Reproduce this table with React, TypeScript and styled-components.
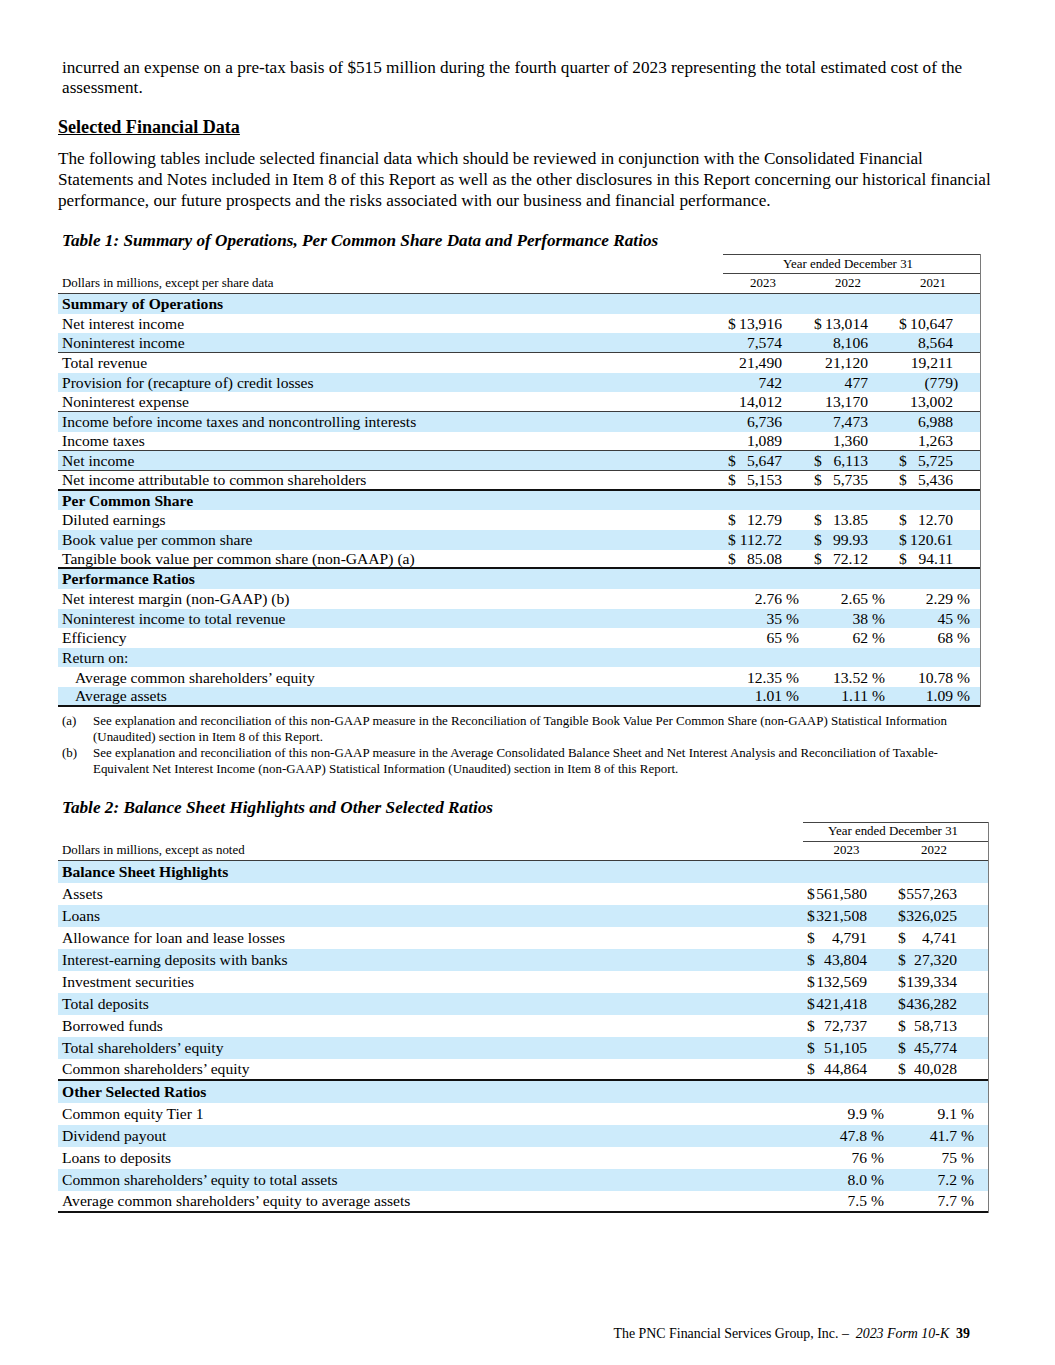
import React from 'react';
import styled, { createGlobalStyle } from 'styled-components';

const GlobalStyle = createGlobalStyle`
  html, body { margin: 0; padding: 0; background: #ffffff; }
  body { font-family: "Liberation Serif", "Times New Roman", serif; color: #000; }
`;

const BLUE = '#cdebfb';

const Page = styled.div`
  width: 1055px;
  min-height: 1365px;
  box-sizing: border-box;
  padding: 58px 0 0 58px;
  display: flex;
  flex-direction: column;
`;

const Para = styled.p<{ $lh: number; $mt: number; $ml?: number }>`
  margin: ${p => p.$mt}px 0 0 ${p => p.$ml ?? 0}px;
  font-size: 17.2px;
  line-height: ${p => p.$lh}px;
  white-space: nowrap;
`;

const Heading = styled.h2`
  margin: 19px 0 0 0;
  font-size: 18.1px;
  line-height: 20px;
  font-weight: bold;
  text-decoration: underline;
`;

const TableTitle = styled.h3<{ $mt: number }>`
  margin: ${p => p.$mt}px 0 0 4px;
  font-size: 17.2px;
  line-height: 20px;
  font-weight: bold;
  font-style: italic;
`;

const Table = styled.div<{ $w: number; $mt: number; $fs: number }>`
  width: ${p => p.$w + 1}px;
  margin-top: ${p => p.$mt}px;
  border-right: 1px solid #7a7a7a;
  box-sizing: border-box;
  font-size: ${p => p.$fs}px;
`;

const Row = styled.div<{ $cols: string; $h: number; $shade?: boolean; $rule?: 'thin' | 'thick' }>`
  display: grid;
  grid-template-columns: ${p => p.$cols};
  height: ${p => p.$h}px;
  box-sizing: border-box;
  align-items: center;
  line-height: 1;
  background: ${p => (p.$shade ? BLUE : 'transparent')};
  border-bottom: ${p =>
    p.$rule === 'thick' ? '2px solid #111' : p.$rule === 'thin' ? '1px solid #3c3c3c' : 'none'};
`;

const HeadRow = styled(Row)`
  font-size: 12.9px;
`;

const Label = styled.div<{ $indent?: boolean; $bold?: boolean }>`
  padding-left: ${p => (p.$indent ? 17 : 4)}px;
  font-weight: ${p => (p.$bold ? 'bold' : 'normal')};
  white-space: nowrap;
`;

const SmallLabel = styled.div`
  padding-left: 4px;
  font-size: 12.9px;
  white-space: nowrap;
`;

const YearEnded = styled.div<{ $span: number; $pr: number }>`
  grid-column: span ${p => p.$span};
  align-self: stretch;
  border-top: 1px solid #444;
  border-bottom: 1px solid #444;
  box-sizing: border-box;
  display: flex;
  align-items: center;
  justify-content: center;
  padding-right: ${p => p.$pr}px;
  font-size: 12.9px;
`;

const Year = styled.div<{ $pr: number }>`
  text-align: center;
  padding-right: ${p => p.$pr}px;
  font-size: 12.9px;
`;

const ValueCell = styled.div<{ $padL: number }>`
  display: flex;
  align-items: center;
  padding-left: ${p => p.$padL}px;
  white-space: nowrap;
`;

const Cur = styled.span`
  flex: 1;
  text-align: left;
`;

const Num = styled.span`
  text-align: right;
`;

const Suf = styled.span<{ $w: number }>`
  width: ${p => p.$w}px;
  text-align: left;
  white-space: pre;
`;

const Notes = styled.div`
  margin: 6px 0 0 4px;
  display: grid;
  grid-template-columns: 31px auto;
  font-size: 12.95px;
  line-height: 16px;
`;

const NoteMark = styled.div``;
const NoteText = styled.div`
  white-space: nowrap;
`;

const Footer = styled.div`
  margin-top: 113px;
  padding-right: 85px;
  display: flex;
  justify-content: flex-end;
  font-size: 13.9px;
  line-height: 16px;
  white-space: pre;
`;

const FootItalic = styled.span`
  font-style: italic;
`;
const FootBold = styled.span`
  font-weight: bold;
`;

type Cell = { cur?: string; num: string; suf?: string };
type DataRow = {
  label: string;
  section?: boolean;
  indent?: boolean;
  rule?: 'thin' | 'thick';
  values?: Cell[];
};
type ColCfg = { padL: number; suf: number; yearPr: number };

const d = (num: string): Cell => ({ cur: '$', num });
const n = (num: string): Cell => ({ num });
const pc = (num: string): Cell => ({ num, suf: ' %' });

const table1: DataRow[] = [
  { label: 'Summary of Operations', section: true },
  { label: 'Net interest income', values: [d('13,916'), d('13,014'), d('10,647')] },
  { label: 'Noninterest income', rule: 'thin', values: [n('7,574'), n('8,106'), n('8,564')] },
  { label: 'Total revenue', values: [n('21,490'), n('21,120'), n('19,211')] },
  { label: 'Provision for (recapture of) credit losses', values: [n('742'), n('477'), { num: '(779', suf: ')' }] },
  { label: 'Noninterest expense', rule: 'thin', values: [n('14,012'), n('13,170'), n('13,002')] },
  { label: 'Income before income taxes and noncontrolling interests', values: [n('6,736'), n('7,473'), n('6,988')] },
  { label: 'Income taxes', rule: 'thin', values: [n('1,089'), n('1,360'), n('1,263')] },
  { label: 'Net income', rule: 'thin', values: [d('5,647'), d('6,113'), d('5,725')] },
  { label: 'Net income attributable to common shareholders', rule: 'thick', values: [d('5,153'), d('5,735'), d('5,436')] },
  { label: 'Per Common Share', section: true },
  { label: 'Diluted earnings', values: [d('12.79'), d('13.85'), d('12.70')] },
  { label: 'Book value per common share', values: [d('112.72'), d('99.93'), d('120.61')] },
  { label: 'Tangible book value per common share (non-GAAP) (a)', rule: 'thick', values: [d('85.08'), d('72.12'), d('94.11')] },
  { label: 'Performance Ratios', section: true },
  { label: 'Net interest margin (non-GAAP) (b)', values: [pc('2.76'), pc('2.65'), pc('2.29')] },
  { label: 'Noninterest income to total revenue', values: [pc('35'), pc('38'), pc('45')] },
  { label: 'Efficiency', values: [pc('65'), pc('62'), pc('68')] },
  { label: 'Return on:' },
  { label: 'Average common shareholders\u2019 equity', indent: true, values: [pc('12.35'), pc('13.52'), pc('10.78')] },
  { label: 'Average assets', indent: true, rule: 'thick', values: [pc('1.01'), pc('1.11'), pc('1.09')] },
];

const table2: DataRow[] = [
  { label: 'Balance Sheet Highlights', section: true },
  { label: 'Assets', values: [d('561,580'), d('557,263')] },
  { label: 'Loans', values: [d('321,508'), d('326,025')] },
  { label: 'Allowance for loan and lease losses', values: [d('4,791'), d('4,741')] },
  { label: 'Interest-earning deposits with banks', values: [d('43,804'), d('27,320')] },
  { label: 'Investment securities', values: [d('132,569'), d('139,334')] },
  { label: 'Total deposits', values: [d('421,418'), d('436,282')] },
  { label: 'Borrowed funds', values: [d('72,737'), d('58,713')] },
  { label: 'Total shareholders\u2019 equity', values: [d('51,105'), d('45,774')] },
  { label: 'Common shareholders\u2019 equity', rule: 'thick', values: [d('44,864'), d('40,028')] },
  { label: 'Other Selected Ratios', section: true },
  { label: 'Common equity Tier 1', values: [pc('9.9'), pc('9.1')] },
  { label: 'Dividend payout', values: [pc('47.8'), pc('41.7')] },
  { label: 'Loans to deposits', values: [pc('76'), pc('75')] },
  { label: 'Common shareholders\u2019 equity to total assets', values: [pc('8.0'), pc('7.2')] },
  { label: 'Average common shareholders\u2019 equity to average assets', rule: 'thick', values: [pc('7.5'), pc('7.7')] },
];

type FinTableProps = {
  width: number;
  mt: number;
  fs: number;
  cols: string;
  colCfg: ColCfg[];
  years: string[];
  unitsLabel: string;
  headHeights: [number, number];
  yearEndedPr: number;
  rowH: number;
  rows: DataRow[];
};

function FinTable(props: FinTableProps) {
  const { width, mt, fs, cols, colCfg, years, unitsLabel, headHeights, yearEndedPr, rowH, rows } = props;
  return (
    <Table $w={width} $mt={mt} $fs={fs}>
      <HeadRow $cols={cols} $h={headHeights[0]}>
        <div />
        <YearEnded $span={years.length} $pr={yearEndedPr}>Year ended December 31</YearEnded>
      </HeadRow>
      <HeadRow $cols={cols} $h={headHeights[1]} $rule="thin">
        <SmallLabel>{unitsLabel}</SmallLabel>
        {years.map((y, i) => (
          <Year key={y} $pr={colCfg[i].yearPr}>{y}</Year>
        ))}
      </HeadRow>
      {rows.map((r, idx) => (
        <Row key={r.label} $cols={cols} $h={rowH} $shade={idx % 2 === 0} $rule={r.rule}>
          <Label $indent={r.indent} $bold={r.section}>{r.label}</Label>
          {colCfg.map((c, i) => {
            const v = r.values?.[i];
            return (
              <ValueCell key={i} $padL={c.padL}>
                {v && (
                  <>
                    <Cur>{v.cur ?? ''}</Cur>
                    <Num>{v.num}</Num>
                    <Suf $w={c.suf}>{v.suf ?? ''}</Suf>
                  </>
                )}
              </ValueCell>
            );
          })}
        </Row>
      ))}
    </Table>
  );
}

export default function App() {
  return (
    <>
      <GlobalStyle />
      <Page>
        <Para $lh={20} $mt={0} $ml={4}>
          incurred an expense on a pre-tax basis of $515 million during the fourth quarter of 2023 representing the total estimated cost of the
          <br />
          assessment.
        </Para>
        <Heading>Selected Financial Data</Heading>
        <Para $lh={21} $mt={10.5}>
          The following tables include selected financial data which should be reviewed in conjunction with the Consolidated Financial
          <br />
          Statements and Notes included in Item 8 of this Report as well as the other disclosures in this Report concerning our historical financial
          <br />
          performance, our future prospects and the risks associated with our business and financial performance.
        </Para>
        <TableTitle $mt={20.5}>Table 1: Summary of Operations, Per Common Share Data and Performance Ratios</TableTitle>
        <FinTable
          width={922}
          mt={3}
          fs={15.6}
          cols="665px 86px 85px 86px"
          colCfg={[
            { padL: 5, suf: 27, yearPr: 6 },
            { padL: 5, suf: 26, yearPr: 7 },
            { padL: 5, suf: 27, yearPr: 8 },
          ]}
          years={['2023', '2022', '2021']}
          unitsLabel="Dollars in millions, except per share data"
          headHeights={[20, 20]}
          yearEndedPr={7}
          rowH={19.667}
          rows={table1}
        />
        <Notes>
          <NoteMark>(a)</NoteMark>
          <NoteText>
            See explanation and reconciliation of this non-GAAP measure in the Reconciliation of Tangible Book Value Per Common Share (non-GAAP) Statistical Information
            <br />
            (Unaudited) section in Item 8 of this Report.
          </NoteText>
          <NoteMark>(b)</NoteMark>
          <NoteText>
            See explanation and reconciliation of this non-GAAP measure in the Average Consolidated Balance Sheet and Net Interest Analysis and Reconciliation of Taxable-
            <br />
            Equivalent Net Interest Income (non-GAAP) Statistical Information (Unaudited) section in Item 8 of this Report.
          </NoteText>
        </Notes>
        <TableTitle $mt={21}>Table 2: Balance Sheet Highlights and Other Selected Ratios</TableTitle>
        <FinTable
          width={930}
          mt={4}
          fs={15.6}
          cols="745px 88px 97px"
          colCfg={[
            { padL: 4, suf: 24, yearPr: 1 },
            { padL: 7, suf: 31, yearPr: 11 },
          ]}
          years={['2023', '2022']}
          unitsLabel="Dollars in millions, except as noted"
          headHeights={[20, 19]}
          yearEndedPr={5}
          rowH={22}
          rows={table2}
        />
        <Footer>
          <span>The PNC Financial Services Group, Inc. {'\u2013\u00a0\u00a0'}</span>
          <FootItalic>2023 Form 10-K</FootItalic>
          <span>{'\u00a0\u00a0'}</span>
          <FootBold>39</FootBold>
        </Footer>
      </Page>
    </>
  );
}
